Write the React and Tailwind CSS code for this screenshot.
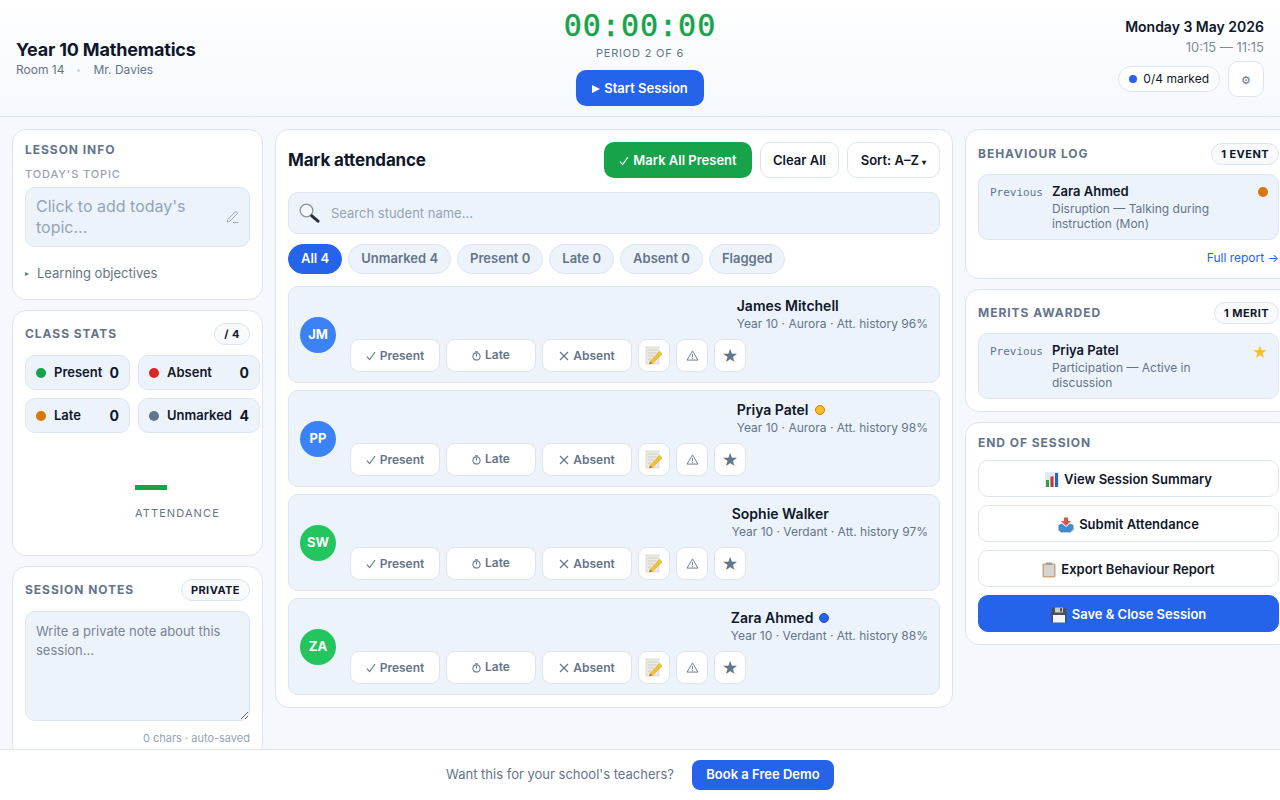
import React from "react";

const students = [
  { initials: "JM", name: "James Mitchell", meta: "Year 10 · Aurora · Att. history 96%", color: "bg-[#3b82f6]" },
  { initials: "PP", name: "Priya Patel", meta: "Year 10 · Aurora · Att. history 98%", color: "bg-[#3b82f6]", dot: "bg-[#fbbf24] border border-[#d97706]" },
  { initials: "SW", name: "Sophie Walker", meta: "Year 10 · Verdant · Att. history 97%", color: "bg-[#22c55e]" },
  { initials: "ZA", name: "Zara Ahmed", meta: "Year 10 · Verdant · Att. history 88%", color: "bg-[#22c55e]", dot: "bg-[#2563eb] border border-[#1d4ed8]" },
];

const filters = ["All 4", "Unmarked 4", "Present 0", "Late 0", "Absent 0", "Flagged"];

const stats = [
  { label: "Present", value: 0, color: "bg-[#16a34a]", w: "w-[105px]" },
  { label: "Absent", value: 0, color: "bg-[#dc2626]", w: "w-[122px]" },
  { label: "Late", value: 0, color: "bg-[#d97706]", w: "w-[105px]" },
  { label: "Unmarked", value: 4, color: "bg-[#64748b]", w: "w-[122px]" },
];

// small drawn icons, the emoji font here looks different from the picture
const CheckIcon = ({ className = "" }) => (
  <svg viewBox="0 0 10 10" className={`w-[10px] h-[10px] ${className}`} fill="none" stroke="currentColor" strokeWidth="1.1">
    <path d="M1 5.6 L3.6 8.6 L9 1" />
  </svg>
);

const CrossIcon = () => (
  <svg viewBox="0 0 10 10" className="w-[10px] h-[10px]" fill="none" stroke="currentColor" strokeWidth="1.2">
    <path d="M1 1 L9 9 M9 1 L1 9" />
  </svg>
);

const ClockIcon = () => (
  <svg viewBox="0 0 10 11" className="w-[9px] h-[10px]" fill="none" stroke="currentColor" strokeWidth="1.2">
    <circle cx="5" cy="6" r="4" />
    <path d="M5 6 L5 3.5 M3.5 0.7 L6.5 0.7" />
  </svg>
);

const WarnIcon = () => (
  <svg viewBox="0 0 14 12" className="w-[13px] h-[11px]" fill="none" stroke="#64748b" strokeWidth="1">
    <path d="M7 1 L13 11 L1 11 Z" strokeLinejoin="round" />
    <path d="M7 4.4 L7 8 M7 9 L7 10" />
  </svg>
);

const PencilIcon = () => (
  <svg viewBox="0 0 14 14" className="w-[14px] h-[14px]" fill="none" stroke="#94a3b8" strokeWidth="1">
    <path d="M1.5 12.5 L2 9.6 L9.8 1.8 C10.4 1.2 11.2 1.2 11.8 1.8 C12.4 2.4 12.4 3.2 11.8 3.8 L4.2 11.6 Z" strokeLinejoin="round" />
    <path d="M7.5 13 L13.5 13" />
  </svg>
);

const SearchIcon = () => (
  <svg viewBox="0 0 21 20" className="w-[21px] h-[20px]">
    <circle cx="7.5" cy="7.5" r="6.3" fill="#f4f7fb" stroke="#8a919c" strokeWidth="1.3" />
    <path d="M12.8 12.8 L19 18.2" stroke="#27303c" strokeWidth="3" strokeLinecap="round" />
  </svg>
);

const MemoIcon = () => (
  <svg viewBox="0 0 18 19" className="w-[18px] h-[19px]">
    <rect x="1" y="1" width="13" height="17" fill="#ebe9e4" stroke="#cfcbc3" strokeWidth="0.6" />
    <path d="M3 4 H12 M3 7 H12 M3 10 H9 M3 13 H6" stroke="#c4c0b8" strokeWidth="0.7" />
    <path d="M5 15.5 L14.5 5.5 L17 8 L7.5 17.5 Z" fill="#f2c230" stroke="#d3a32a" strokeWidth="0.5" />
    <path d="M5 15.5 L7.5 17.5 L4 18.3 Z" fill="#b8772c" />
  </svg>
);

const ChartIcon = () => (
  <svg viewBox="0 0 14 15" className="w-[14px] h-[15px] shrink-0">
    <rect x="0" y="0" width="14" height="15" fill="#e3e9ee" />
    <rect x="1" y="8" width="3" height="7" fill="#2aa14a" />
    <rect x="5.5" y="4.5" width="3" height="10.5" fill="#d0312d" />
    <rect x="10" y="1" width="3" height="14" fill="#2668c4" />
  </svg>
);

const InboxIcon = () => (
  <svg viewBox="0 0 16 16" className="w-[16px] h-[16px] shrink-0">
    <path d="M6 0.5 H10 V4 H13 L8 9 L3 4 H6 Z" fill="#e2504a" />
    <path d="M0.5 8 L4 6.5 L8 10 L12 6.5 L15.5 8 V13 L13 15.5 H3 L0.5 13 Z" fill="#3f8ccf" />
    <path d="M3.5 15 H12.5 L15 12.5 V13.5 L13 15.5 H3 Z" fill="#cfe2f2" />
  </svg>
);

const ClipboardIcon = () => (
  <svg viewBox="0 0 14 16" className="w-[14px] h-[16px] shrink-0">
    <rect x="0.5" y="1.5" width="13" height="14" rx="1" fill="#c9a783" />
    <rect x="2" y="3" width="10" height="11" fill="#d4d4d2" />
    <rect x="4" y="0.5" width="6" height="2" fill="#9c9c9a" />
  </svg>
);

const FloppyIcon = () => (
  <svg viewBox="0 0 16 16" className="w-[16px] h-[16px] shrink-0">
    <path d="M0.5 0.5 H13.5 L15.5 2.5 V15.5 H0.5 Z" fill="#4a5058" />
    <rect x="4" y="0.5" width="8" height="5" fill="#c7ccd2" />
    <rect x="9" y="1.2" width="2" height="3.4" fill="#4a5058" />
    <rect x="2" y="8" width="12" height="7.5" fill="#f5f6f8" />
  </svg>
);

const Card = ({ className = "", children }) => (
  <div className={`bg-white border border-[#dde5f0] rounded-[14px] ${className}`}>{children}</div>
);

const Heading = ({ children }) => (
  <h3 className="text-[12px] leading-[16px] font-bold tracking-[0.96px] uppercase text-[#64748b]">{children}</h3>
);

const Badge = ({ children }) => (
  <span className="h-[22px] px-[9px] flex items-center rounded-full border border-[#dde5f0] bg-[#f8fafc] text-[11px] font-bold tracking-[0.44px] text-[#0f172a]">{children}</span>
);

const MarkButton = ({ icon, label, raised }) => (
  <button className="w-[90px] h-[33px] flex items-center justify-center gap-[4px] bg-white border border-[#dde5f0] rounded-[9px] text-[12px] font-semibold text-[#64748b]">
    {icon}
    <span className={raised ? "-mt-[2px]" : ""}>{label}</span>
  </button>
);

const IconButton = ({ children }) => (
  <button className="w-[32px] h-[33px] flex items-center justify-center bg-white border border-[#dde5f0] rounded-[9px] text-[16px] leading-none text-[#64748b]">{children}</button>
);

const LogItem = ({ name, detail, marker }) => (
  <div className="flex gap-[9px] bg-[#edf3fb] border border-[#dde5f0] rounded-[10px] pl-[11px] pr-[10px] pt-[7px] pb-[8px] mt-[9px]">
    <span className="font-['DejaVu_Sans_Mono',monospace] text-[11px] leading-[18px] text-[#64748b] shrink-0 mt-[2px]">Previous</span>
    <div className="flex-1 min-w-0">
      <div className="text-[13px] leading-[18px] font-semibold text-[#0f172a]">{name}</div>
      <div className="text-[12px] leading-[15px] text-[#64748b] pr-[24px] mt-[1px]">{detail}</div>
    </div>
    {marker}
  </div>
);

const SessionButton = ({ icon, children, primary }) => (
  <button className={`h-[37px] w-full pt-[2px] flex items-center justify-center gap-[5px] rounded-[10px] border text-[13px] font-semibold ${primary ? "bg-[#2563eb] border-[#2563eb] text-white" : "bg-white border-[#dde5f0] text-[#0f172a]"}`}>
    {icon}
    {children}
  </button>
);

const App = () => {
  return (
    <div className="h-screen flex flex-col overflow-hidden bg-[#f5f8fd] font-['Inter',sans-serif] text-[#0f172a]">
      <header className="h-[117px] shrink-0 grid grid-cols-3 px-[16px] border-b border-[#dde5f0] bg-gradient-to-b from-white to-[#f5f8fd]">
        <div className="pt-[39px]">
          <h1 className="text-[18px] leading-[22px] font-bold tracking-[-0.18px]">Year 10 Mathematics</h1>
          <div className="flex items-center gap-[13px] text-[12px] leading-[16px] text-[#64748b] mt-[1px]">
            <span>Room 14</span>
            <span className="w-[3px] h-[3px] rounded-full bg-[#cbd5e1]"></span>
            <span>Mr. Davies</span>
          </div>
        </div>
        <div className="flex flex-col items-center pt-[8px]">
          <div className="font-['DejaVu_Sans_Mono',monospace] font-normal [-webkit-text-stroke:0.5px_#16a34a] text-[30px] leading-[36px] tracking-[1px] text-[#16a34a]">00:00:00</div>
          <div className="text-[11px] leading-[14px] tracking-[0.8px] text-[#64748b] mt-[2px]">PERIOD 2 OF 6</div>
          <button className="w-[128px] h-[36px] mt-[10px] pt-[1px] flex items-center justify-center gap-[4px] bg-[#2563eb] rounded-[10px] text-white text-[13px] font-semibold">
            <svg viewBox="0 0 8 8" className="w-[8px] h-[8px]" fill="currentColor"><path d="M0 0 L8 4 L0 8 Z" /></svg>
            Start Session
          </button>
        </div>
        <div className="flex flex-col items-end pt-[18px]">
          <div className="text-[14px] leading-[18px] font-semibold">Monday 3 May 2026</div>
          <div className="text-[13px] leading-[18px] text-[#7f8ca0] mt-[2px]">10:15 — 11:15</div>
          <div className="flex items-center gap-[8px] mt-[5px]">
            <div className="h-[26px] px-[10px] flex items-center gap-[6px] bg-white border border-[#dde5f0] rounded-full text-[12px]">
              <span className="w-2 h-2 rounded-full bg-[#2563eb]"></span>
              0/4 marked
            </div>
            <button className="w-[36px] h-[36px] flex items-center justify-center bg-white border border-[#dde5f0] rounded-[10px] text-[11px] pt-[2px] text-[#64748b]">⚙</button>
          </div>
        </div>
      </header>

      <main className="flex-1 min-h-0 overflow-hidden grid grid-cols-[251px_678px_327px] gap-[12px] items-start p-[12px]">
        <div className="flex flex-col gap-[10.5px]">
          <Card className="h-[170.5px] px-[12px] pt-[12px]">
            <Heading>Lesson Info</Heading>
            <div className="text-[11px] leading-[14px] tracking-[0.88px] font-medium text-[#94a3b8] mt-[9px]">TODAY'S TOPIC</div>
            <div className="mt-[6px] h-[60px] flex items-center justify-between bg-[#edf3fb] border border-[#dde5f0] rounded-[10px] pl-[10px] pr-[10px]">
              <span className="text-[16px] leading-[21px] text-[#94a3b8]">Click to add today's topic...</span>
              <PencilIcon />
            </div>
            <div className="flex items-center gap-[8px] mt-[17px] text-[13px] leading-[18px] text-[#64748b]">
              <span className="text-[8px]">▸</span>
              Learning objectives
            </div>
          </Card>

          <Card className="h-[245.5px] px-[12px] pt-[12px]">
            <div className="flex items-center justify-between">
              <Heading>Class Stats</Heading>
              <Badge>/ 4</Badge>
            </div>
            <div className="flex flex-wrap gap-x-[8px] gap-y-[8px] w-[235px] mt-[10px]">
              {stats.map((s) => (
                <div key={s.label} className={`${s.w} h-[35px] flex items-center bg-[#edf3fb] border border-[#dde5f0] rounded-[10px] px-[10px] shrink-0`}>
                  <span className={`w-[10px] h-[10px] rounded-full ${s.color}`}></span>
                  <span className="ml-[8px] flex-1 text-[13px] font-semibold">{s.label}</span>
                  <span className="text-[14px] font-bold">{s.value}</span>
                </div>
              ))}
            </div>
            <div className="ml-[110px] mt-[52px]">
              <div className="w-[32px] h-[5px] bg-[#16a34a]"></div>
              <div className="text-[11px] leading-[14px] tracking-[1.1px] text-[#64748b] mt-[16px]">ATTENDANCE</div>
            </div>
          </Card>

          <Card className="px-[12px] pt-[12px] pb-[12px]">
            <div className="flex items-center justify-between">
              <Heading>Session Notes</Heading>
              <Badge>PRIVATE</Badge>
            </div>
            <textarea
              className="block w-full h-[110px] mt-[10px] bg-[#edf3fb] border border-[#dde5f0] rounded-[10px] px-[10px] py-[10px] text-[13px] leading-[19px] placeholder:text-[#7b8494] outline-none"
              placeholder="Write a private note about this session..."
            ></textarea>
            <div className="text-right text-[11px] leading-[14px] text-[#94a3b8] mt-[10px]">0 chars · auto-saved</div>
          </Card>
        </div>

        <Card className="px-[12px] pt-[12px] pb-[12px]">
          <div className="flex items-center justify-between h-[36px]">
            <h2 className="text-[17px] pt-[2px] font-bold tracking-[-0.17px]">Mark attendance</h2>
            <div className="flex items-center gap-[8px]">
              <button className="h-[36px] w-[148px] flex items-center justify-center gap-[4px] pt-[1px] bg-[#16a34a] rounded-[10px] text-white text-[13px] font-semibold"><CheckIcon />Mark All Present</button>
              <button className="h-[36px] w-[79px] pt-[1px] bg-white border border-[#dde5f0] rounded-[10px] text-[13px] font-semibold">Clear All</button>
              <button className="h-[36px] w-[93px] pt-[1px] bg-white border border-[#dde5f0] rounded-[10px] text-[13px] font-semibold">Sort: A–Z <span className="text-[8px]">▾</span></button>
            </div>
          </div>
          <div className="mt-[14px] h-[42px] flex items-center bg-[#edf3fb] border border-[#dde5f0] rounded-[10px] px-[10px]">
            <SearchIcon />
            <span className="ml-[11px] pt-[1px] text-[13px] text-[#94a3b8]">Search student name...</span>
          </div>
          <div className="flex gap-[6px] mt-[10px]">
            {filters.map((f, i) => (
              <button
                key={f}
                className={`h-[30px] px-[12px] rounded-full border text-[13px] font-semibold ${i === 0 ? "bg-[#2563eb] border-[#2563eb] text-white" : "bg-[#edf3fb] border-[#dde5f0] text-[#64748b]"}`}
              >
                {f}
              </button>
            ))}
          </div>
          <div className="flex flex-col gap-[7px] mt-[12px]">
            {students.map((s) => (
              <div key={s.name} className="h-[97px] flex items-center gap-[14px] bg-[#edf3fb] border border-[#dde5f0] rounded-[10px] px-[11px]">
                <div className={`w-[36px] h-[36px] rounded-full flex items-center justify-center text-white text-[13px] font-bold shrink-0 ${s.color}`}>{s.initials}</div>
                <div className="flex-1 min-w-0 flex flex-col">
                  <div className="self-end">
                    <div className="flex items-center gap-[6px] text-[14px] leading-[18px] font-semibold">
                      {s.name}
                      {s.dot && <span className={`w-[10px] h-[10px] rounded-full ${s.dot}`}></span>}
                    </div>
                    <div className="text-[12px] leading-[16px] text-[#64748b] mt-[1px]">{s.meta}</div>
                  </div>
                  <div className="flex items-center gap-[6px] mt-[7px]">
                    <MarkButton icon={<CheckIcon />} label="Present" />
                    <MarkButton icon={<ClockIcon />} label="Late" raised />
                    <MarkButton icon={<CrossIcon />} label="Absent" />
                    <IconButton><MemoIcon /></IconButton>
                    <IconButton><WarnIcon /></IconButton>
                    <IconButton>★</IconButton>
                  </div>
                </div>
              </div>
            ))}
          </div>
        </Card>

        <div className="flex flex-col gap-[10.5px]">
          <Card className="h-[149.5px] px-[12px] pt-[13px]">
            <div className="flex items-center justify-between">
              <Heading>Behaviour Log</Heading>
              <Badge>1 EVENT</Badge>
            </div>
            <LogItem
              name="Zara Ahmed"
              detail="Disruption — Talking during instruction (Mon)"
              marker={<span className="w-[10px] h-[10px] rounded-full bg-[#d97706] mt-[5px] shrink-0"></span>}
            />
            <div className="text-right text-[12px] leading-[16px] text-[#2563eb] mt-[10px]">Full report →</div>
          </Card>
          <Card className="h-[122.5px] px-[12px] pt-[12px]">
            <div className="flex items-center justify-between">
              <Heading>Merits Awarded</Heading>
              <Badge>1 MERIT</Badge>
            </div>
            <LogItem
              name="Priya Patel"
              detail="Participation — Active in discussion"
              marker={<span className="text-[15px] leading-[18px] mt-[3px] text-[#fbbf24] shrink-0">★</span>}
            />
          </Card>
          <Card className="h-[223px] px-[12px] pt-[12px]">
            <Heading>End of Session</Heading>
            <div className="flex flex-col gap-[8px] mt-[9px]">
              <SessionButton icon={<ChartIcon />}>View Session Summary</SessionButton>
              <SessionButton icon={<InboxIcon />}>Submit Attendance</SessionButton>
              <SessionButton icon={<ClipboardIcon />}>Export Behaviour Report</SessionButton>
              <SessionButton primary icon={<FloppyIcon />}>Save & Close Session</SessionButton>
            </div>
          </Card>
        </div>
      </main>

      <footer className="h-[51px] shrink-0 flex items-center justify-center gap-[18px] bg-white border-t border-[#dde5f0]">
        <span className="text-[13px] text-[#64748b]">Want this for your school's teachers?</span>
        <button className="h-[30px] w-[142px] bg-[#2563eb] rounded-[8px] text-white text-[13px] font-semibold">Book a Free Demo</button>
      </footer>
    </div>
  );
};

export default App;
